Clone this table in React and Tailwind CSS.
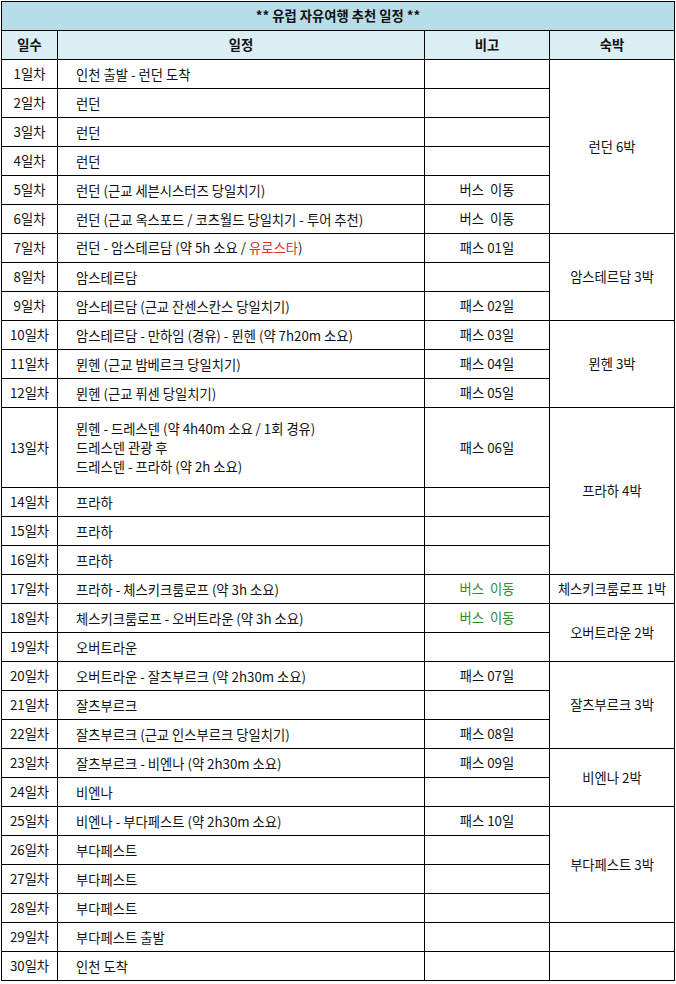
const rows = [
  { d: '1일차', s: ['인천 출발 - 런던 도착'], n: '', stay: { t: '런던 6박', span: 6 } },
  { d: '2일차', s: ['런던'], n: '' },
  { d: '3일차', s: ['런던'], n: '' },
  { d: '4일차', s: ['런던'], n: '' },
  { d: '5일차', s: ['런던 (근교 세븐시스터즈 당일치기)'], n: '버스  이동' },
  { d: '6일차', s: ['런던 (근교 옥스포드 / 코츠월드 당일치기 - 투어 추천)'], n: '버스  이동' },
  { d: '7일차', s: ['euro'], n: '패스 01일', stay: { t: '암스테르담 3박', span: 3 } },
  { d: '8일차', s: ['암스테르담'], n: '' },
  { d: '9일차', s: ['암스테르담 (근교 잔센스칸스 당일치기)'], n: '패스 02일' },
  { d: '10일차', s: ['암스테르담 - 만하임 (경유) - 뮌헨 (약 7h20m 소요)'], n: '패스 03일', stay: { t: '뮌헨 3박', span: 3 } },
  { d: '11일차', s: ['뮌헨 (근교 밤베르크 당일치기)'], n: '패스 04일' },
  { d: '12일차', s: ['뮌헨 (근교 퓌센 당일치기)'], n: '패스 05일' },
  { d: '13일차', s: ['뮌헨 - 드레스덴 (약 4h40m 소요 / 1회 경유)', '드레스덴 관광 후', '드레스덴 - 프라하 (약 2h 소요)'], n: '패스 06일', stay: { t: '프라하 4박', span: 4 }, tall: true },
  { d: '14일차', s: ['프라하'], n: '' },
  { d: '15일차', s: ['프라하'], n: '' },
  { d: '16일차', s: ['프라하'], n: '' },
  { d: '17일차', s: ['프라하 - 체스키크룸로프 (약 3h 소요)'], n: '버스  이동', green: true, stay: { t: '체스키크룸로프 1박', span: 1 } },
  { d: '18일차', s: ['체스키크룸로프 - 오버트라운 (약 3h 소요)'], n: '버스  이동', green: true, stay: { t: '오버트라운 2박', span: 2 } },
  { d: '19일차', s: ['오버트라운'], n: '' },
  { d: '20일차', s: ['오버트라운 - 잘츠부르크 (약 2h30m 소요)'], n: '패스 07일', stay: { t: '잘츠부르크 3박', span: 3 } },
  { d: '21일차', s: ['잘츠부르크'], n: '' },
  { d: '22일차', s: ['잘츠부르크 (근교 인스부르크 당일치기)'], n: '패스 08일' },
  { d: '23일차', s: ['잘츠부르크 - 비엔나 (약 2h30m 소요)'], n: '패스 09일', stay: { t: '비엔나 2박', span: 2 } },
  { d: '24일차', s: ['비엔나'], n: '' },
  { d: '25일차', s: ['비엔나 - 부다페스트 (약 2h30m 소요)'], n: '패스 10일', stay: { t: '부다페스트 3박', span: 4 } },
  { d: '26일차', s: ['부다페스트'], n: '' },
  { d: '27일차', s: ['부다페스트'], n: '' },
  { d: '28일차', s: ['부다페스트'], n: '' },
  { d: '29일차', s: ['부다페스트 출발'], n: '', stay: { t: '', span: 1 } },
  { d: '30일차', s: ['인천 도착'], n: '', stay: { t: '', span: 1 } },
];

function Schedule({ lines }) {
  if (lines[0] === 'euro') {
    return (
      <span>
        런던 - 암스테르담 (약 5h 소요 / <span className="text-[#e0302a]">유로스타</span>)
      </span>
    );
  }
  // multi-line cell: one text block with line breaks
  return (
    <div className="leading-[19px]">
      {lines.map((l, i) => (
        <span key={i}>
          {i > 0 && <br />}
          {l}
        </span>
      ))}
    </div>
  );
}

export default function App() {
  const cell = 'border border-black p-0';
  return (
    <div className="min-h-screen bg-white pt-[1px] pl-[1px] text-[13.3px] text-[#111] font-['Noto_Sans_CJK_KR','Noto_Sans',sans-serif]">
      <table className="table-fixed border-collapse w-[673px]">
        <colgroup>
          <col className="w-[56px]" />
          <col className="w-[367px]" />
          <col className="w-[125px]" />
          <col className="w-[125px]" />
        </colgroup>
        <tbody>
          <tr className="h-[29px]">
            <td colSpan={4} className={`${cell} bg-[#b7dee8] text-center font-bold`}>
              ** 유럽 자유여행 추천 일정 **
            </td>
          </tr>
          <tr className="h-[29px] bg-[#daeef3] font-bold text-center">
            <td className={cell}>일수</td>
            <td className={cell}>일정</td>
            <td className={cell}>비고</td>
            <td className={cell}>숙박</td>
          </tr>
          {rows.map((r) => (
            <tr key={r.d} className={r.tall ? 'h-[80px]' : 'h-[29px]'}>
              <td className={`${cell} text-center`}>{r.d}</td>
              <td className={`${cell} pl-[18px] whitespace-nowrap`}>
                <Schedule lines={r.s} />
              </td>
              <td className={`${cell} text-center whitespace-pre ${r.green ? 'text-[#2e8b2e]' : ''}`}>{r.n}</td>
              {r.stay && (
                <td rowSpan={r.stay.span} className={`${cell} text-center`}>{r.stay.t}</td>
              )}
            </tr>
          ))}
        </tbody>
      </table>
    </div>
  );
}
